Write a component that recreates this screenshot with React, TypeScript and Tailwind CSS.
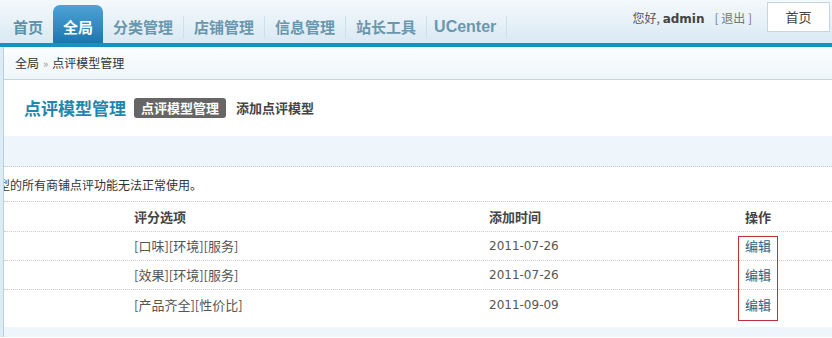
import React from "react";

const tabs = ["分类管理", "店铺管理", "信息管理", "站长工具", "UCenter"];

const rows = [
  { opts: "[口味][环境][服务]", date: "2011-07-26" },
  { opts: "[效果][环境][服务]", date: "2011-07-26" },
  { opts: "[产品齐全][性价比]", date: "2011-09-09" },
];

const cjk = "font-['Noto_Sans_CJK_SC','Noto_Sans',sans-serif]";

const App = () => {
  return (
    <div className={`w-[832px] h-[338px] overflow-hidden bg-white text-[12px] text-[#333] ${cjk}`}>
      {/* 顶部导航 */}
      <header className="h-[43px] flex items-end bg-gradient-to-b from-[#f4f9fc] to-[#dae9f3]">
        <nav className="flex items-end h-full pl-[8px]">
          <a className="h-[38px] pt-[5px] px-[5px] flex items-center text-[15px] font-bold text-[#5f91a8] leading-none">首页</a>
          <a className="ml-[5px] h-[38px] pt-[5px] w-[50px] rounded-t-[7px] bg-gradient-to-b from-[#4ea3d6] to-[#1877b0] flex items-center justify-center text-[15px] font-bold text-white leading-none">
            全局
          </a>
          {tabs.map((t) => (
            <div key={t} className="flex items-center h-[38px] pt-[5px]">
              <a
                className={`px-[10px] text-[15px] font-bold text-[#6a97ad] leading-none ${
                  t === "UCenter" ? "font-['Liberation_Sans',sans-serif] text-[16px] pl-[7px]" : ""
                }`}
              >
                {t}
              </a>
              <span className="w-px h-[22px] bg-[#cfe0ea]" />
            </div>
          ))}
        </nav>
        <div className="ml-auto flex items-start h-full pt-[2px] pr-[2px]">
          <span className="mt-[10px] mr-[15px] text-[12px] text-[#555] leading-none">
            您好, <b className="font-['DejaVu_Sans',sans-serif] text-[#444]">admin</b>
            <span className="ml-[10px] text-[#777]">[ 退出 ]</span>
          </span>
          <button className="w-[63px] h-[30px] bg-white border border-[#c6d6de] text-[13px] text-[#444]">首页</button>
        </div>
      </header>
      <div className="h-[4px] bg-[#1592bf]" />

      <div className="bg-[#dcecf5] pl-[3px]">
        <div className="border-l border-[#b9d0dd] bg-white">
          {/* 面包屑 */}
          <div className="h-[33px] flex items-center pl-[11px] bg-gradient-to-b from-[#fbfdfe] to-[#eff6fa] border-b border-[#c3d5df] text-[12px] text-[#333]">
            全局 <span className="mx-[4px] text-[#999] text-[11px]">»</span> 点评模型管理
          </div>

          {/* 标题 */}
          <div className="h-[56px] flex items-center pl-[20px]">
            <h3 className="text-[17px] font-bold text-[#1e87ad] w-[110px]">点评模型管理</h3>
            <span className="px-[7px] h-[20px] flex items-center rounded-[3px] bg-[#666] text-white font-bold text-[13px]">点评模型管理</span>
            <span className="ml-[10px] font-bold text-[#444] text-[13px]">添加点评模型</span>
          </div>

          <div className="h-[31px] bg-[#eef5fb] border-b border-dotted border-[#ccc]" />

          {/* 提示 */}
          <div className="h-[35px] flex items-center overflow-hidden border-b border-dotted border-[#ccc] whitespace-nowrap">
            <span className="ml-[-6px] pt-[2px] text-[12px] text-[#333]">型的所有商铺点评功能无法正常使用。</span>
          </div>

          {/* 表格 */}
          <div className="relative pb-[8px]">
            <div className="h-[30px] flex items-center border-b border-dotted border-[#ccc] font-bold text-[13px] text-[#444]">
              <span className="ml-[130px] w-[355px]">评分选项</span>
              <span className="w-[249px]">添加时间</span>
              <span className="w-[40px] text-center">操作</span>
            </div>
            {rows.map((r, i) => (
              <div
                key={i}
                className={`h-[29px] flex items-center text-[13px] text-[#555] ${i < 2 ? "border-b border-dotted border-[#ccc]" : ""}`}
              >
                <span className="ml-[130px] w-[355px]">{r.opts}</span>
                <span className="w-[249px] font-['DejaVu_Sans',sans-serif] text-[12px]">{r.date}</span>
                <a className="w-[40px] text-center text-[#2a6584]">编辑</a>
              </div>
            ))}
            <div className="absolute left-[734px] top-[34px] w-[40px] h-[85px] border border-[#c0303a]" />
          </div>
          <div className="h-[10px] bg-[#eef5fb]" />
        </div>
      </div>
    </div>
  );
};

export default App;
